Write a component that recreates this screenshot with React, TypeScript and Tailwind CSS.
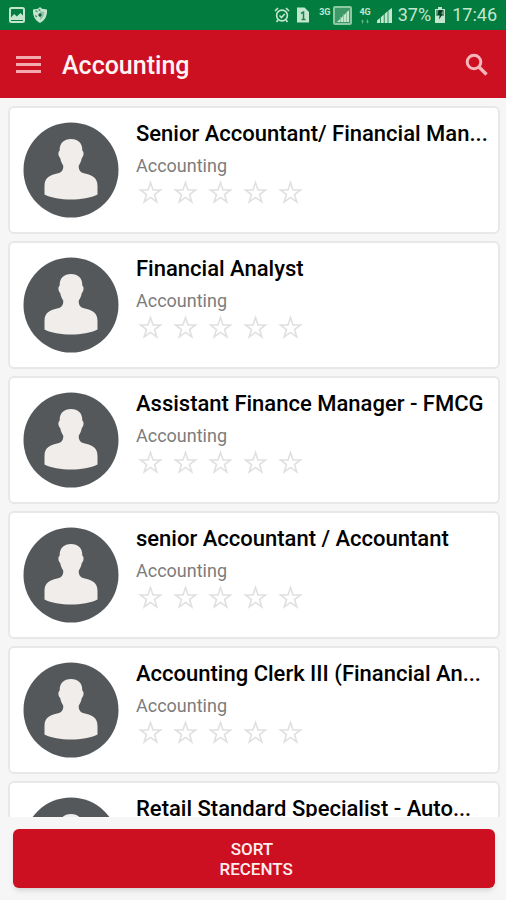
import type { ReactNode } from 'react';

interface Job {
  id: number;
  title: string;
  category: string;
}

const JOBS: Job[] = [
  { id: 1, title: 'Senior Accountant/ Financial Man...', category: 'Accounting' },
  { id: 2, title: 'Financial Analyst', category: 'Accounting' },
  { id: 3, title: 'Assistant Finance Manager - FMCG', category: 'Accounting' },
  { id: 4, title: 'senior Accountant / Accountant', category: 'Accounting' },
  { id: 5, title: 'Accounting Clerk III (Financial An...', category: 'Accounting' },
  { id: 6, title: 'Retail Standard Specialist - Auto...', category: 'Accounting' },
];

const STARS = [1, 2, 3, 4, 5];

function NetworkLabel({ children }: { children: ReactNode }) {
  return <span className="block text-[9px] leading-3 font-bold">{children}</span>;
}

function StatusBar() {
  return (
    <div className="h-[30px] shrink-0 bg-[#027d3f] text-[#c4e6cf] flex items-center justify-between px-[9px]">
      <div className="flex items-center gap-[7px]">
        <svg className="w-4 h-4" viewBox="0 0 16 16" fill="none">
          <rect x="1" y="1" width="14" height="14" rx="1.5" stroke="currentColor" strokeWidth="2" />
          <path d="M2 13v-2.500l3.200-3.500 2.600 2.600L11.500 6 14 8.500V13z" fill="currentColor" />
        </svg>
        <svg className="w-4 h-4" viewBox="0 0 16 16">
          <path d="M8 0l2 1.800 5 .7c.3 6-1.500 10.500-7 13.500C2.500 13 .7 8.500 1 2.500l5-.7z" fill="currentColor" />
          <path d="M3.500 3.500l2 1.500M3 8.500l2 1.500M7.500 2v2" stroke="#4e9a6d" strokeWidth="1.500" />
          <path d="M8 4v9c2.500-1.500 4-4 4.500-8z" fill="#8fc3a3" />
          <circle cx="8" cy="8" r="1.700" fill="#1f5a3a" />
        </svg>
      </div>

      <div className="flex items-center">
        <svg className="w-4 h-4 mr-[7px]" viewBox="0 0 16 16" fill="none" stroke="currentColor" strokeWidth="1.600">
          <circle cx="8" cy="8.500" r="5.400" />
          <path d="M5.500 8.500l2 2 3.200-3.500M1 4l3-3M15 4l-3-3M4 13l-1.500 2M12 13l1.500 2" />
        </svg>
        <svg className="w-3 h-4 mr-[10px]" viewBox="0 0 12 16">
          <path d="M0 .5h7.500L12 5v10.500H0z" fill="currentColor" />
          <path d="M4 6.500l2.500-1.500v8M4.500 12.500h4" fill="none" stroke="#1b8550" strokeWidth="1.500" />
        </svg>
        <div className="self-start mt-[3px]">
          <NetworkLabel>3G</NetworkLabel>
        </div>
        <svg className="w-[19px] h-[19px] ml-[3px] mr-[7px]" viewBox="0 0 19 19">
          <rect x="1" y="1" width="17" height="17" rx="1" fill="#3d9a68" stroke="#8cc9a3" strokeWidth="2" />
          <path d="M4 16L16 4v12z" fill="currentColor" />
          <path d="M7.500 11v5M10.500 8v8M13.500 6v10" stroke="#7dbb94" strokeWidth=".8" />
        </svg>
        <div className="self-start mt-[3px] flex flex-col items-center">
          <NetworkLabel>4G</NetworkLabel>
          <svg className="w-2 h-[5px] mt-px" viewBox="0 0 8 4" fill="#6db489">
            <path d="M0 2l1.500-2L3 2H2v2H1V2zM5 2l1.500 2L8 2H7V0H6v2z" />
          </svg>
        </div>
        <svg className="w-[15px] h-[15px] ml-[6px] mr-[6px]" viewBox="0 0 15 15" fill="currentColor">
          <path d="M0 15v-2.500L3 10v5zM3.800 15V9.300L6.800 6.500V15zM7.600 15V6l3-3v12zM11.400 15V2.500L15 0v15z" />
        </svg>
        <span className="text-lg leading-6">37%</span>
        <svg className="w-[10px] h-4 ml-1 mr-[7px]" viewBox="0 0 10 16">
          <path d="M3 0h4v2h3v14H0V2h3z" fill="currentColor" />
          <path d="M1 3h8v6H1z" fill="#5c9b78" />
          <path d="M8 3H3.500L2.500 8h2.200L4 12.500 7.800 7H6z" fill="#033d22" />
        </svg>
        <span className="text-lg leading-6">17:46</span>
      </div>
    </div>
  );
}

function Header() {
  return (
    <header className="h-[68px] shrink-0 bg-[#cc1022] flex items-center px-4">
      <button type="button" aria-label="Menu" className="text-[#f3a9ae]">
        <svg className="w-[25px] h-[17px]" viewBox="0 0 25 17" fill="currentColor">
          <path d="M0 0h25v3H0zM0 7h25v3H0zM0 14h25v3H0z" />
        </svg>
      </button>
      <h1 className="ml-[21px] pt-1 flex-1 text-[25px] leading-8 font-medium text-[#fff4f3]">Accounting</h1>
      <button type="button" aria-label="Search" className="text-[#f6b5ba]">
        <svg
          className="w-[26px] h-[26px]"
          viewBox="0 0 26 26"
          fill="none"
          stroke="currentColor"
          strokeWidth="3"
        >
          <circle cx="10" cy="11" r="6.800" />
          <path d="M15 16l7.500 7.500" strokeWidth="3.400" />
        </svg>
      </button>
    </header>
  );
}

function Avatar() {
  return (
    <svg className="w-[96px] h-[96px] shrink-0" viewBox="0 0 96 96">
      <circle cx="48" cy="48" r="47.500" fill="#55585a" />
      <path
        d="M48 17C55 17 59.500 21 59.300 28.500C61.300 30 60.800 34 58.800 36C58.200 39.500 56.800 42 55.800 43.500C55.500 47 56.500 49.500 60 51C68 53 74.500 54.500 74.500 64V72.500C68 76 58 77.500 48 77.500S28 76 21.500 72.500V64C21.500 54.500 28 53 36 51C39.500 49.500 40.500 47 40.200 43.500C39.200 42 37.800 39.500 37.200 36C35.200 34 34.700 30 36.700 28.500C36.500 21 41 17 48 17Z"
        fill="#f0edeb"
      />
    </svg>
  );
}

function Rating() {
  return (
    <div className="mt-px flex gap-2 text-[#e0e0e0]" role="img" aria-label="Not rated">
      {STARS.map((star) => (
        <svg key={star} className="w-[27px] h-[27px]" viewBox="0 0 27 27" fill="none" stroke="currentColor" strokeWidth="1.600">
          <path d="M14.500 3.500L17 11H24.500L18.500 15.500L20.800 23L14.500 18.400L8.200 23L10.500 15.500L4.500 11H12Z" />
        </svg>
      ))}
    </div>
  );
}

function JobCard({ job }: { job: Job }) {
  return (
    <li className="h-32 shrink-0 flex items-start gap-[17px] bg-white border-2 border-[#e8e8e8] rounded-md pl-[13px] pt-[14px]">
      <Avatar />
      <div className="min-w-0 flex-1">
        <h2 className="text-[22px] leading-6 font-medium text-black whitespace-nowrap">{job.title}</h2>
        <p className="mt-2 text-lg leading-6 text-[#7c7c7c]">{job.category}</p>
        <Rating />
      </div>
    </li>
  );
}

export default function App() {
  return (
    <div className="h-screen flex flex-col overflow-hidden bg-[#f6f6f6] font-[Roboto,sans-serif]">
      <StatusBar />
      <Header />
      <main className="flex-1 min-h-0 overflow-x-hidden overflow-y-auto [scrollbar-width:none]">
        <ul className="flex flex-col gap-[7px] pt-2 pl-2 pr-[6px] pb-2">
          {JOBS.map((job) => (
            <JobCard key={job.id} job={job} />
          ))}
        </ul>
      </main>
      <footer className="shrink-0 py-3 pl-[13px] pr-[11px]">
        <button
          type="button"
          className="w-full h-[59px] rounded-md bg-[#cc1022] text-[#fdeeee] text-[17px] leading-5 font-medium shadow-md"
        >
          SORT&nbsp;
          <br />
          &nbsp;RECENTS
        </button>
      </footer>
    </div>
  );
}
